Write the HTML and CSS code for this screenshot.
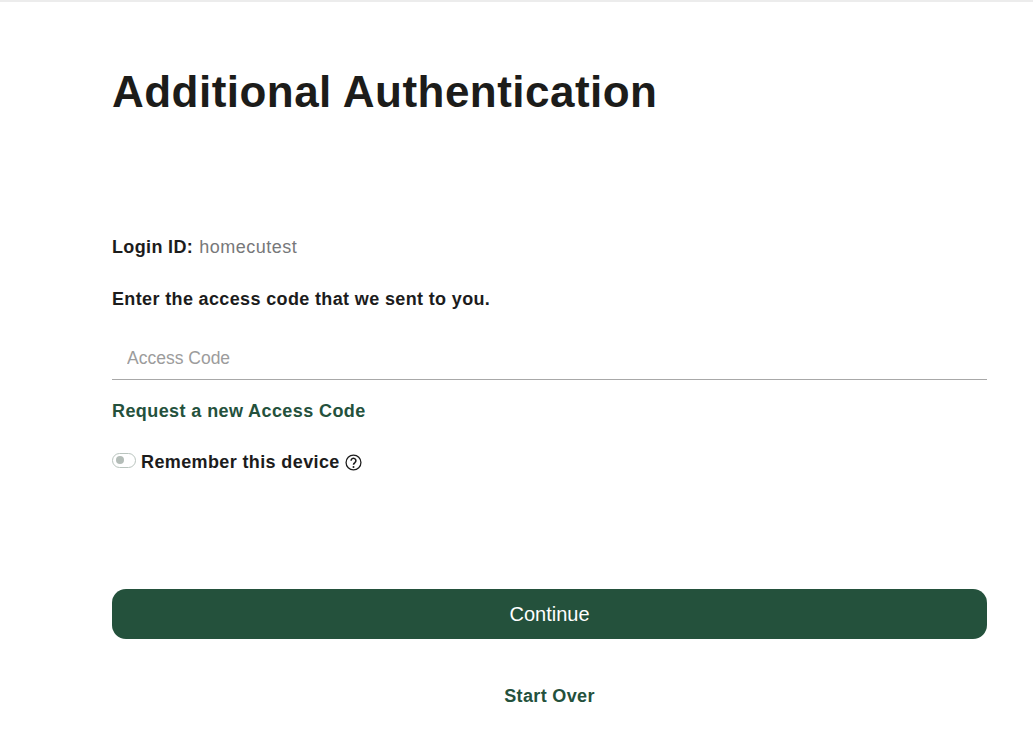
FILE: index.html
```html
<!DOCTYPE html>
<html lang="en">
<head>
  <meta charset="UTF-8" />
  <title>Additional Authentication</title>
  <meta name="viewport" content="width=device-width, initial-scale=1" />
  <link rel="stylesheet" href="styles.css">
</head>
<body>

  <div class="container">
    <h1 class="title">Additional Authentication</h1>

    <div class="login-id">
      <span class="login-label">Login ID:</span>
      <span class="login-value">homecutest</span>
    </div>

    <p class="prompt">Enter the access code that we sent to you.</p>

    <div class="field">
      <input type="text" class="field-input" placeholder="Access Code" aria-label="Access Code" />
    </div>

    <a href="#" class="request-link">Request a new Access Code</a>

    <div class="remember">
      <span class="toggle"><span class="toggle-knob"></span></span>
      <span class="remember-label">Remember this device</span>
      <svg class="help-icon" viewBox="0 0 24 24" aria-hidden="true">
        <circle cx="12" cy="12" r="10.5" fill="none" stroke="#1c1c1c" stroke-width="1.8"/>
        <path d="M8.6 9.6a3.4 3.4 0 1 1 5.3 2.7c-1.3.8-1.9 1.4-1.9 2.9" fill="none" stroke="#1c1c1c" stroke-width="2.2"/>
        <circle cx="12" cy="18.2" r="1.4" fill="#1c1c1c"/>
      </svg>
    </div>

    <button class="continue-button">Continue</button>

    <a href="#" class="start-over">Start Over</a>
  </div>

</body>
</html>
```

FILE: styles.css
```css
html, body {
  margin: 0;
  padding: 0;
  font-family: 'Liberation Sans', Arial, sans-serif;
  background: #fff;
  color: #1c1c1c;
}

body {
  border-top: 2px solid #ececec;
  min-height: 754px;
  box-sizing: border-box;
  overflow: hidden;
}

.container {
  display: flex;
  flex-direction: column;
  align-items: flex-start;
  padding: 0 46px 0 112px;
}

.title {
  margin: 64px 0 0;
  font-size: 44px;
  line-height: 52px;
  font-weight: bold;
  letter-spacing: 0.47px;
  color: #1c1c1a;
}

.login-id {
  display: flex;
  gap: 6px;
  margin-top: 117px;
  font-size: 18px;
  line-height: 24px;
}

.login-label {
  font-weight: bold;
  letter-spacing: 0.35px;
}

.login-value {
  color: #77787a;
  letter-spacing: 0.5px;
}

.prompt {
  margin: 28px 0 0;
  font-size: 18px;
  line-height: 24px;
  font-weight: bold;
  letter-spacing: 0.36px;
}

.field {
  width: 100%;
  margin-top: 24px;
  border-bottom: 1px solid #a8a8a8;
}

.field-input {
  display: block;
  width: 100%;
  box-sizing: border-box;
  height: 44px;
  padding: 2px 15px 0;
  border: none;
  outline: none;
  background: transparent;
  font-family: inherit;
  font-size: 17.5px;
}

.field-input::placeholder {
  color: #9c9c9c;
  opacity: 1;
}

.request-link {
  margin-top: 19px;
  font-size: 18px;
  line-height: 24px;
  font-weight: bold;
  letter-spacing: 0.41px;
  color: #24513c;
  text-decoration: none;
}

.remember {
  display: flex;
  align-items: center;
  margin-top: 27px;
  font-size: 18px;
  line-height: 24px;
  font-weight: bold;
  letter-spacing: 0.38px;
}

.toggle {
  display: flex;
  align-items: center;
  width: 24px;
  height: 15px;
  box-sizing: border-box;
  margin: -4px 5px 0 0;
  padding-left: 3px;
  border: 1px solid #b9c4be;
  border-radius: 8px;
  background: #fff;
}

.toggle-knob {
  width: 8px;
  height: 8px;
  border-radius: 50%;
  background: #b4bdb8;
}

.help-icon {
  width: 17px;
  height: 17px;
  margin-left: 5px;
}

.continue-button {
  width: 100%;
  height: 50px;
  margin-top: 115px;
  border: none;
  border-radius: 14px;
  background: #24513c;
  color: #fff;
  font-family: inherit;
  font-size: 20px;
  cursor: pointer;
}

.start-over {
  align-self: center;
  margin-top: 45px;
  font-size: 18px;
  line-height: 24px;
  font-weight: bold;
  letter-spacing: 0.35px;
  color: #24513c;
  text-decoration: none;
}
```
